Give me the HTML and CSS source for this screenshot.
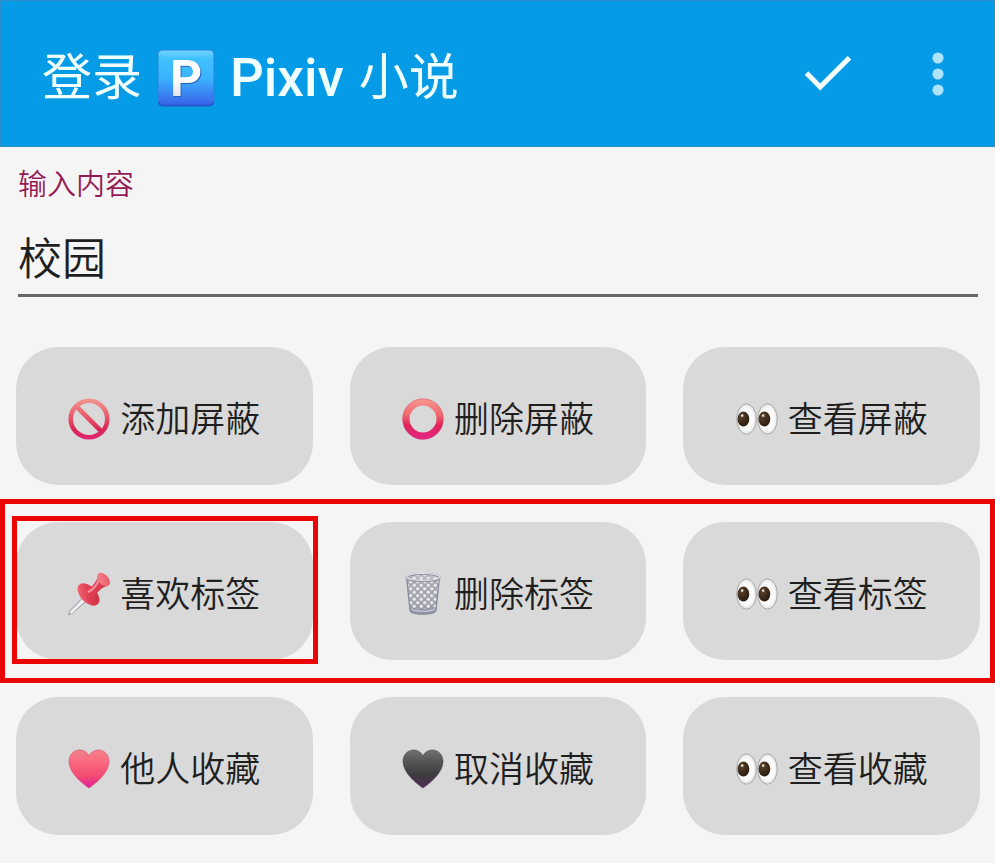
FILE: index.html
```
<!DOCTYPE html>
<html lang="zh-CN">
<head>
<meta charset="utf-8">
<meta name="viewport" content="width=device-width, initial-scale=1">
<title>登录 Pixiv 小说</title>
<link rel="stylesheet" href="styles.css">
</head>
<body>
<svg class="defs" aria-hidden="true">
  <defs>
    <linearGradient id="g-park" x1="0" y1="0" x2="0" y2="1"><stop offset="0" stop-color="#74d4ff"/><stop offset=".16" stop-color="#3fc1ff"/><stop offset=".5" stop-color="#3bb4ff"/><stop offset="1" stop-color="#3a5fe8"/></linearGradient>
    <linearGradient id="g-letter" x1="0" y1="0" x2="0" y2="1"><stop offset=".5" stop-color="#fff"/><stop offset="1" stop-color="#cfd3e2"/></linearGradient>
    <linearGradient id="g-ring" gradientUnits="userSpaceOnUse" x1="0" y1="0" x2="0" y2="42"><stop offset="0" stop-color="#f79a90"/><stop offset=".4" stop-color="#f0696f"/><stop offset=".65" stop-color="#e0245a"/><stop offset="1" stop-color="#e5258a"/></linearGradient>
    <linearGradient id="g-ban" gradientUnits="userSpaceOnUse" x1="0" y1="0" x2="0" y2="42"><stop offset="0" stop-color="#f39a94"/><stop offset=".4" stop-color="#e9606b"/><stop offset=".75" stop-color="#d92858"/><stop offset="1" stop-color="#e02572"/></linearGradient>
    <linearGradient id="g-heart" x1="0" y1="0" x2="0" y2="1"><stop offset="0" stop-color="#f2828c"/><stop offset=".25" stop-color="#fb6f83"/><stop offset=".7" stop-color="#f24a72"/><stop offset="1" stop-color="#dc1fa0"/></linearGradient>
    <linearGradient id="g-black" x1="0" y1="0" x2="0" y2="1"><stop offset="0" stop-color="#727272"/><stop offset=".3" stop-color="#555556"/><stop offset=".65" stop-color="#3c3b3e"/><stop offset="1" stop-color="#542a58"/></linearGradient>
    <radialGradient id="g-white" cx=".5" cy=".5" r=".55"><stop offset=".65" stop-color="#fbfbfb"/><stop offset="1" stop-color="#d6d6d6"/></radialGradient>
    <radialGradient id="g-iris" cx=".35" cy=".3" r=".75"><stop offset="0" stop-color="#5c4630"/><stop offset=".55" stop-color="#3f2c1a"/><stop offset="1" stop-color="#281c12"/></radialGradient>
    <linearGradient id="g-pin" x1="0" y1="0" x2="1" y2="1"><stop offset="0" stop-color="#f8747f"/><stop offset=".5" stop-color="#de4052"/><stop offset="1" stop-color="#c42a40"/></linearGradient>
    <linearGradient id="g-pinhead" x1="0" y1="0" x2="1" y2="1"><stop offset="0" stop-color="#f58a90"/><stop offset="1" stop-color="#ec5568"/></linearGradient>
    <linearGradient id="g-bin" x1="0" y1="0" x2="0" y2="1"><stop offset="0" stop-color="#a9aab2"/><stop offset=".7" stop-color="#a0a1ae"/><stop offset="1" stop-color="#8f90a3"/></linearGradient>
    <pattern id="mesh" width="7" height="7" patternUnits="userSpaceOnUse"><circle cx="1.750" cy="1.750" r="1.700" fill="#e6e6ea"/><circle cx="5.250" cy="5.250" r="1.700" fill="#e6e6ea"/></pattern>
    <symbol id="eyes" viewBox="0 0 42 42">
      <ellipse cx="10.500" cy="21" rx="9.800" ry="15.200" fill="url(#g-white)" stroke="#a9a9a9"/>
      <ellipse cx="31.500" cy="21" rx="9.800" ry="15.200" fill="url(#g-white)" stroke="#a9a9a9"/>
      <ellipse cx="7.400" cy="21" rx="5.900" ry="7.400" fill="url(#g-iris)"/>
      <ellipse cx="28.400" cy="21" rx="5.900" ry="7.400" fill="url(#g-iris)"/>
      <circle cx="6.200" cy="17.600" r="1.300" fill="#e5dccf"/><circle cx="27.200" cy="17.600" r="1.300" fill="#e5dccf"/>
    </symbol>
    <symbol id="heart" viewBox="0 0 42 42"><path d="M21 40C15 36 1 25 1 13.500C1 7 5.500 2 11.500 2C16 2 19.500 4.500 21 8C22.500 4.500 26 2 30.500 2C36.500 2 41 7 41 13.500C41 25 27 36 21 40Z"/></symbol>
  </defs>
</svg>

<header class="bar">
  <h1 class="title">
    <span>登录</span>
    <svg class="parking" viewBox="0 0 58 58" role="img" aria-label="P">
      <rect x="1" y="1" width="56" height="56" rx="4" fill="url(#g-park)" stroke="#2584dc"/>
      <path d="M2 53a4 4 0 0 0 4 3.500H52A4 4 0 0 0 56 53" fill="none" stroke="#2450c8" stroke-width="1.500"/>
      <text class="letter shade" x="30" y="48" text-anchor="middle">P</text>
      <text class="letter" x="29" y="47" text-anchor="middle" fill="url(#g-letter)">P</text>
    </svg>
    <span class="latin">Pixiv</span>
    <span>小说</span>
  </h1>
  <button class="action" type="button" aria-label="确定">
    <svg width="48" height="36" viewBox="0 0 48 36"><path d="M2.500 17L16.200 31L45.500 1.700" fill="none" stroke="#f4ffff" stroke-width="5"/></svg>
  </button>
  <button class="action more" type="button" aria-label="更多选项">
    <svg width="12" height="44" viewBox="0 0 12 44" fill="#ace4fd"><circle cx="6" cy="6" r="5.600"/><circle cx="6" cy="22" r="5.600"/><circle cx="6" cy="38" r="5.600"/></svg>
  </button>
</header>

<main class="content">
  <div class="field">
    <label for="keyword">输入内容</label>
    <input id="keyword" type="text" value="校园">
  </div>

  <div class="rows">
    <div class="row">
      <button class="tile" type="button">
        <svg class="icon" viewBox="0 0 42 42" fill="none" stroke="url(#g-ban)" stroke-width="4.600"><circle cx="21" cy="21" r="18.300"/><path d="M8.500 8.500L33.500 33.500"/></svg>
        <span>添加屏蔽</span>
      </button>
      <button class="tile" type="button">
        <svg class="icon" viewBox="0 0 42 42" fill="none"><circle cx="21" cy="21" r="17" stroke="url(#g-ring)" stroke-width="7"/><circle cx="21" cy="21" r="20.200" stroke="#c9385f" stroke-opacity=".35"/></svg>
        <span>删除屏蔽</span>
      </button>
      <button class="tile" type="button">
        <svg class="icon"><use href="#eyes"/></svg>
        <span>查看屏蔽</span>
      </button>
    </div>

    <div class="row marked">
      <button class="tile marked-tile" type="button">
        <svg class="icon" viewBox="0 0 42 42">
          <path d="M18.500 20.500L22.500 24.500L4.500 40L.5 42L2 37.500Z" fill="#d7d9df" stroke="#8d9098" stroke-width=".8"/>
          <path d="M20 23L3 40" stroke="#fff" stroke-width="1.200"/>
          <ellipse cx="20.500" cy="21.500" rx="8" ry="13.500" transform="rotate(-43 20.500 21.500)" fill="url(#g-pin)"/>
          <path d="M17 18C21 17 27 11 29.500 4.500L38.500 13C33 15 28 20 25.500 26C21.500 26 17 22 17 18Z" fill="url(#g-pin)"/>
          <path d="M20 19C24 18 29 12 31 7" fill="none" stroke="#fa909a" stroke-width="2"/>
          <ellipse cx="35.500" cy="6.500" rx="5" ry="8" transform="rotate(-43 35.500 6.500)" fill="url(#g-pinhead)"/>
        </svg>
        <span>喜欢标签</span>
      </button>
      <button class="tile" type="button">
        <svg class="icon" viewBox="0 0 42 42">
          <path d="M4.500 4L8 37.500C9 42.500 33 42.500 34 37.500L37.500 4Z" fill="url(#g-bin)"/>
          <path d="M4.500 4L8 34C15 36 27 36 34 34L37.500 4Z" fill="url(#mesh)"/>
          <path d="M4.500 4L8 37.500C9 42.500 33 42.500 34 37.500L37.500 4" fill="none" stroke="#85879a" stroke-width="1.200"/>
          <path d="M9 36C14 39 28 39 33 36" fill="none" stroke="#c9cad6" stroke-width="1.200"/>
          <ellipse cx="21" cy="4.500" rx="16.500" ry="3.600" fill="#b5b6bf"/>
          <ellipse cx="21" cy="4.500" rx="16.500" ry="3.600" fill="url(#mesh)" stroke="#8f909a" stroke-width="2"/>
          <ellipse cx="21" cy="4" rx="16.500" ry="3.500" fill="none" stroke="#e5e5e9" stroke-width="1.200"/>
        </svg>
        <span>删除标签</span>
      </button>
      <button class="tile" type="button">
        <svg class="icon"><use href="#eyes"/></svg>
        <span>查看标签</span>
      </button>
    </div>

    <div class="row">
      <button class="tile" type="button">
        <svg class="icon" fill="url(#g-heart)" stroke="#d94868" stroke-opacity=".6"><use href="#heart"/></svg>
        <span>他人收藏</span>
      </button>
      <button class="tile" type="button">
        <svg class="icon" fill="url(#g-black)" stroke="#4a4a4a" stroke-opacity=".6"><use href="#heart"/></svg>
        <span>取消收藏</span>
      </button>
      <button class="tile" type="button">
        <svg class="icon"><use href="#eyes"/></svg>
        <span>查看收藏</span>
      </button>
    </div>
  </div>
</main>
</body>
</html>
```
FILE: styles.css
```
* {
  box-sizing: border-box;
}

body {
  margin: 0;
  background: #f5f5f5;
  color: #1f1f1f;
  font-family: Roboto, "Noto Sans CJK SC", sans-serif;
  font-weight: 350;
}

button {
  border: 0;
  padding: 0;
  color: inherit;
  font: inherit;
}

.defs {
  position: absolute;
  width: 0;
  height: 0;
}

.bar {
  display: flex;
  align-items: center;
  height: 147px;
  padding: 0 32px 0 41px;
  border: 1px solid #2c8cc4;
  background: #059be7;
}

.title {
  display: flex;
  flex: 1;
  align-items: center;
  gap: 15px;
  margin: 8px 0 0;
  color: #f0ffff;
  font-size: 50px;
  font-weight: 400;
  line-height: 72px;
  white-space: nowrap;
}

.latin {
  font-size: 53px;
  font-weight: 500;
}

.parking {
  width: 58px;
  height: 58px;
  overflow: visible;
}

.letter {
  font-family: Roboto, sans-serif;
  font-size: 50px;
  font-weight: 700;
  line-height: 1;
}

.shade {
  fill: #2467b8;
}

.action {
  display: flex;
  align-items: center;
  justify-content: center;
  width: 48px;
  height: 48px;
  background: none;
}

.more {
  margin-left: 62px;
}

.content {
  padding: 16px 15px 28px 16px;
}

.field {
  display: flex;
  flex-direction: column;
  padding: 0 2px;
}

.field label {
  color: #951b55;
  font-size: 29px;
  line-height: 44px;
}

.field input {
  width: 100%;
  height: 90px;
  padding: 18px 0 8px;
  border: 0;
  border-bottom: 3px solid #676767;
  border-radius: 0;
  outline: 0;
  background: none;
  color: #1f1f1f;
  font: inherit;
  font-size: 44px;
}

.rows {
  display: grid;
  gap: 37px;
  margin-top: 50px;
}

.row {
  display: grid;
  grid-template-columns: repeat(3, 1fr);
  gap: 37px;
}

.tile {
  display: flex;
  align-items: center;
  justify-content: center;
  gap: 10px;
  height: 138px;
  padding-top: 6px;
  border-radius: 42px;
  background: #d9d9d9;
  font-size: 35px;
  line-height: 52px;
  white-space: nowrap;
}

.tile span {
  padding-top: 4px;
}

.icon {
  width: 42px;
  height: 42px;
  overflow: visible;
}

.marked,
.marked-tile {
  position: relative;
}

.marked::after,
.marked-tile::after {
  position: absolute;
  border: 5px solid #eb0606;
  content: "";
  pointer-events: none;
}

.marked::after {
  inset: -23px -15px -23px -16px;
}

.marked-tile::after {
  inset: -6px -5px -4px -4px;
}
```
